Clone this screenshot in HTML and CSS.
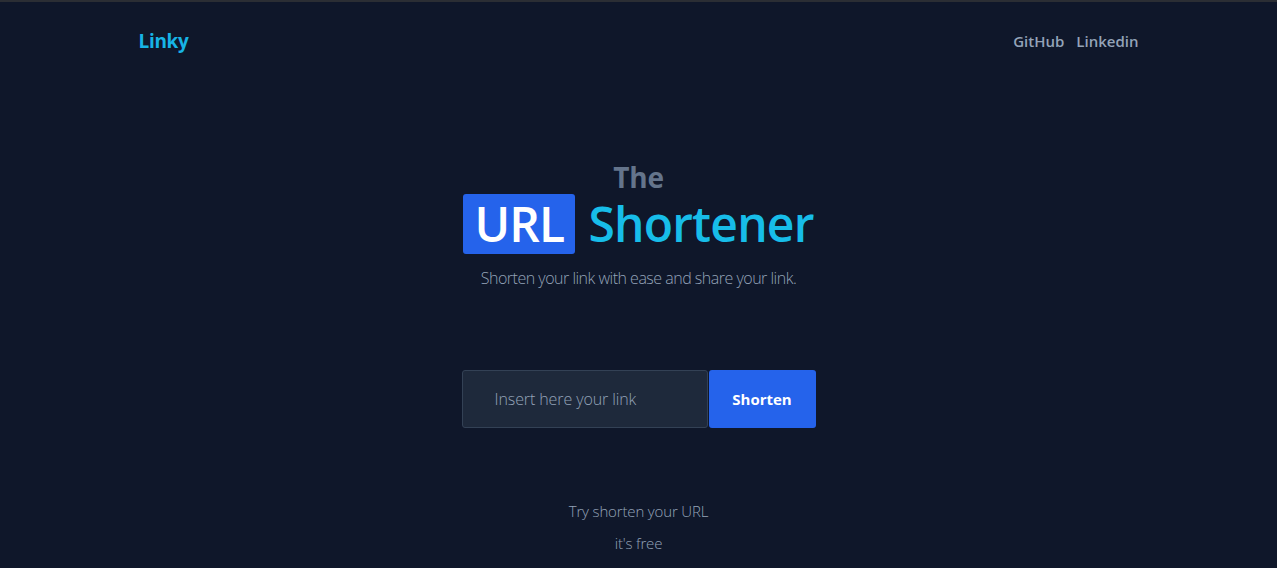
FILE: index.html
```html
<!DOCTYPE html>
<html lang="en">
<head>
<meta charset="utf-8">
<title>Linky</title>
<link rel="stylesheet" href="styles.css">
</head>
<body>
<div class="topline"></div>
<header class="nav">
  <a class="brand" href="#">Linky</a>
  <nav class="links">
    <a href="#">GitHub</a>
    <a href="#">Linkedin</a>
  </nav>
</header>
<main class="hero">
  <h2 class="the">The</h2>
  <h1 class="title"><span class="url">URL</span><span class="shortener">Shortener</span></h1>
  <p class="subtitle">Shorten your link with ease and share your link.</p>
  <form class="form">
    <input class="input" type="text" placeholder="Insert here your link">
    <button class="btn" type="button">Shorten</button>
  </form>
  <div class="note">
    <p>Try shorten your URL</p>
    <p>it's free</p>
  </div>
</main>
</body>
</html>
```
FILE: styles.css
```css
* { box-sizing: border-box; }
html, body { margin: 0; padding: 0; }
body {
  background: #0f172a;
  font-family: "Open Sans", "Noto Sans", sans-serif;
  color: #94a3b8;
  height: 568px;
  overflow: hidden;
}
.topline { height: 2px; background: #2b2e34; }
.nav {
  max-width: 1000px;
  margin: 0 auto;
  display: flex;
  justify-content: space-between;
  align-items: center;
  height: 78px;
}
.brand {
  color: #17b4e6;
  font-weight: 700;
  font-size: 19px;
  letter-spacing: -0.3px;
  text-decoration: none;
}
.links { display: flex; gap: 12px; }
.links a {
  color: #94a3b8;
  font-weight: 600;
  font-size: 15px;
  text-decoration: none;
}
.hero {
  display: flex;
  flex-direction: column;
  align-items: center;
  padding-top: 80px;
}
.the {
  margin: 0;
  font-size: 28px;
  line-height: 34px;
  font-weight: 700;
  color: #64748b;
  letter-spacing: -0.3px;
}
.title {
  margin: 0;
  display: flex;
  align-items: center;
  gap: 13px;
  font-size: 48px;
  line-height: 48px;
  font-weight: 600;
  letter-spacing: -0.8px;
}
.url {
  background: #2563eb;
  color: #fff;
  padding: 6px 11px;
  border-radius: 3px;
}
.shortener { color: #17bde9; }
.subtitle {
  margin: 13px 0 0;
  font-size: 16px;
  font-weight: 300;
  letter-spacing: -0.5px;
  color: #94a3b8;
}
.form {
  margin-top: 81px;
  display: flex;
}
.input {
  width: 246px;
  height: 58px;
  background: #1e293b;
  border: 1px solid #334155;
  border-radius: 3px;
  padding: 0 32px;
  font-family: inherit;
  font-size: 16px;
  font-weight: 300;
  letter-spacing: -0.1px;
  color: #cbd5e1;
  outline: none;
}
.input::placeholder { color: #94a3b8; }
.btn {
  margin-left: 1px;
  width: 107px;
  height: 58px;
  background: #2563eb;
  border: none;
  border-radius: 3px;
  color: #fff;
  font-family: inherit;
  font-size: 15px;
  font-weight: 700;
}
.note {
  margin-top: 67px;
  text-align: center;
}
.note p {
  margin: 0;
  font-size: 15px;
  font-weight: 300;
  letter-spacing: -0.15px;
  line-height: 32px;
  color: #94a3b8;
}
```
